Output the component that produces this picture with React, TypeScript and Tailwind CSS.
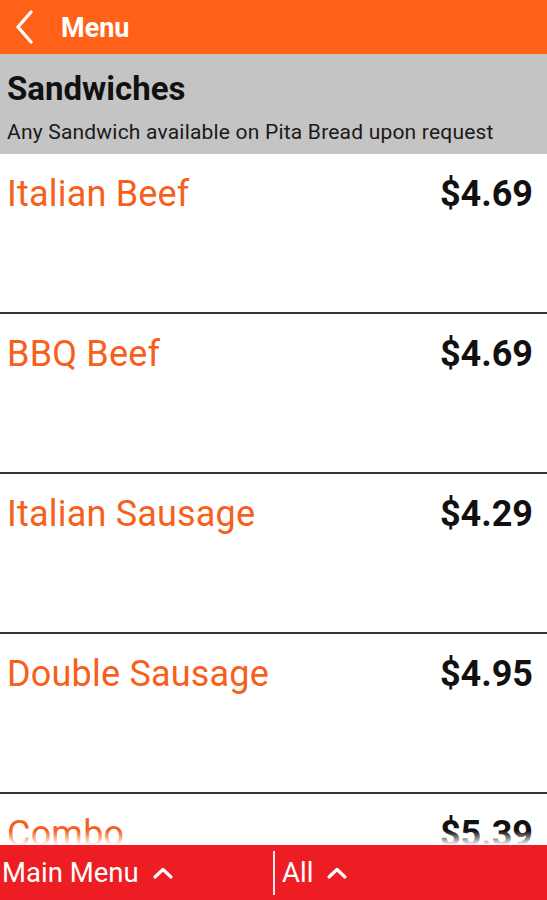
const items = [
  { name: 'Italian Beef', price: '$4.69' },
  { name: 'BBQ Beef', price: '$4.69' },
  { name: 'Italian Sausage', price: '$4.29' },
  { name: 'Double Sausage', price: '$4.95' },
  { name: 'Combo', price: '$5.39' },
];

function CaretUp() {
  return (
    <svg className="w-[22px] h-[14px]" viewBox="0 0 22 14" fill="none">
      <path d="M3 11 L11 3.5 L19 11" stroke="white" strokeWidth="3.2" strokeLinecap="round" strokeLinejoin="round" />
    </svg>
  );
}

export default function App() {
  return (
    <div
      className="w-[547px] h-[900px] flex flex-col bg-white overflow-hidden"
      style={{ fontFamily: 'Roboto, "Liberation Sans", sans-serif' }}
    >
      <header className="h-[54px] shrink-0 bg-[#ff6119] flex items-center">
        <svg className="ml-[14px] w-[20px] h-[34px]" viewBox="0 0 20 34" fill="none">
          <path d="M17 2 L4 17 L17 32" stroke="white" strokeWidth="3.4" strokeLinecap="round" strokeLinejoin="round" />
        </svg>
        <h1 className="ml-[27px] pt-[2px] text-white font-bold text-[27px] leading-none">Menu</h1>
      </header>

      <section className="h-[100px] shrink-0 bg-[#c4c4c4] px-[7px] pt-[16px]">
        <h2 className="text-[33px] font-bold text-[#111] leading-[38px]">Sandwiches</h2>
        <p className="mt-[12px] text-[21px] tracking-[0.2px] text-[#1a1a1a] leading-[24px]">
          Any Sandwich available on Pita Bread upon request
        </p>
      </section>

      <div className="relative flex-1 overflow-hidden">
        {items.map((item) => (
          <div
            key={item.name}
            className="h-[160px] border-b-2 border-[#333] flex justify-between items-start pt-[20px] pl-[7px] pr-[14px]"
          >
            <span className="text-[36px] tracking-[0.2px] leading-[40px] text-[#f7601c]">{item.name}</span>
            <span className="text-[36px] leading-[40px] font-bold text-[#111]">{item.price}</span>
          </div>
        ))}
        <div className="absolute left-0 right-0 bottom-0 h-[14px] bg-gradient-to-b from-transparent to-white" />
      </div>

      <footer className="h-[55px] shrink-0 bg-[#ee1d23] flex items-center text-white text-[27.5px]">
        <div className="w-[273px] flex items-center gap-[13px] pl-[2px]">
          <span>Main Menu</span>
          <CaretUp />
        </div>
        <div className="w-[2px] h-[44px] bg-white/90" />
        <div className="flex items-center gap-[13px] pl-[7px]">
          <span>All</span>
          <CaretUp />
        </div>
      </footer>
    </div>
  );
}
